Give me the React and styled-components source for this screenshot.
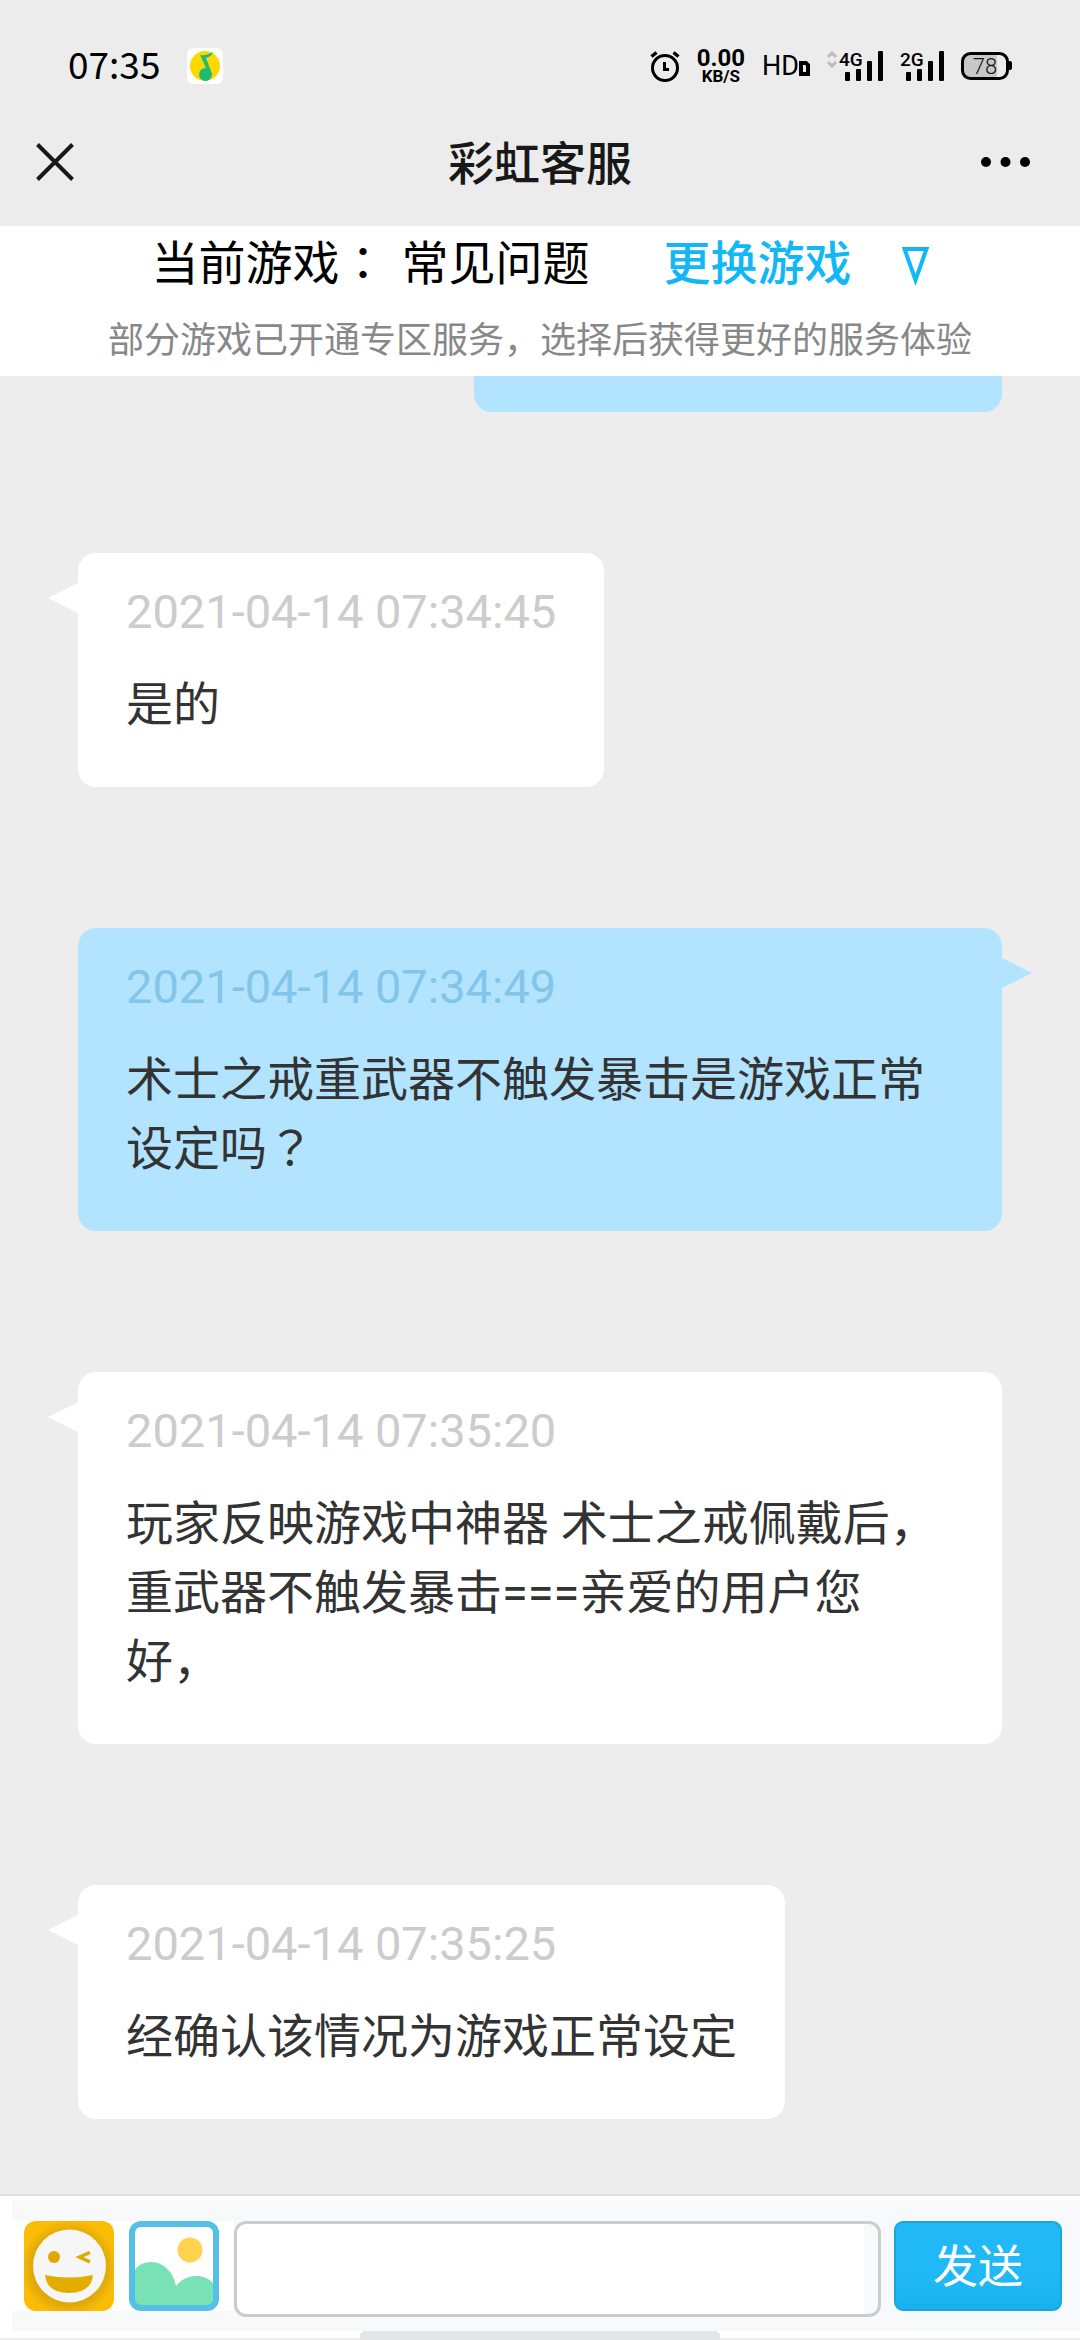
import React from 'react'
import styled, { createGlobalStyle, css } from 'styled-components'

const MusicIcon = () => (
  <svg width='36' height='36' viewBox='0 0 36 36' aria-hidden='true'>
    <rect width='36' height='36' rx='6' fill='#fff' />
    <circle cx='18' cy='18' r='15' fill='#fdd800' />
    <path d='M13 7c5 1 9-1 13-3-1 3-3 5-7 6l5 13a6.500 6.500 0 1 1-5-3L15 11z' fill='#1fbb74' />
  </svg>
)

const AlarmIcon = () => (
  <svg width='30' height='32' viewBox='0 0 30 32' fill='none' stroke='#000' aria-hidden='true'>
    <circle cx='15' cy='18' r='12.500' strokeWidth='3' />
    <path d='M14.500 12v7.500H19' strokeWidth='3' />
    <path d='M1.500 6.500 6.500 2.500M28.500 6.500 23.500 2.500' strokeWidth='3.500' />
  </svg>
)

const SimIcon = () => (
  <svg width='11' height='15' viewBox='0 0 11 15' aria-hidden='true'>
    <path d='M2 2h5l2 2v9H2z' fill='none' stroke='#000' strokeWidth='4' />
  </svg>
)

const Signal = ({ label, data }) => (
  <svg width={data ? 56 : 44} height='32' viewBox={data ? '-12 0 56 32' : '0 0 44 32'} role='img' aria-label={label}>
    {data && (
      <path d='M-11 7l4-4 4 4M-11 12l4 4 4-4' fill='none' stroke='#bbb' strokeWidth='3' />
    )}
    <text x='0' y='16' fontFamily='Roboto, sans-serif' fontSize='19' fontWeight='500'>{label}</text>
    <rect x='6' y='22' width='5' height='9' rx='1' />
    <rect x='17' y='19' width='5' height='12' rx='1' />
    <rect x='28' y='11' width='5' height='20' rx='1' />
    <rect x='39' y='1' width='5' height='30' rx='1' />
  </svg>
)

const Battery = () => (
  <svg width='51' height='28' viewBox='0 0 51 28' role='img' aria-label='78%'>
    <path d='M10 2h26v24H10a8 8 0 0 1-8-8v-8a8 8 0 0 1 8-8z' fill='#c8c8c8' />
    <rect x='1.500' y='1.500' width='45' height='25' rx='8' fill='none' stroke='#000' strokeWidth='3' />
    <path d='M47 9h2q2 0 2 2v5q0 2-2 2h-2z' />
    <text x='24' y='22' textAnchor='middle' fontFamily='Roboto, sans-serif' fontSize='22' fontWeight='300' fill='#111'>78</text>
  </svg>
)

const CloseIcon = () => (
  <svg width='38' height='38' viewBox='0 0 38 38' aria-hidden='true'>
    <path d='M1.500 1.500l35 35M36.500 1.500l-35 35' stroke='#181818' strokeWidth='4' />
  </svg>
)

const MoreIcon = () => (
  <svg width='50' height='10' viewBox='0 0 50 10' aria-hidden='true'>
    <circle cx='5' cy='5' r='5' />
    <circle cx='24.500' cy='5' r='5' />
    <circle cx='44' cy='5' r='5' />
  </svg>
)

const DownIcon = () => (
  <svg width='27' height='35' viewBox='0 0 27 35' aria-hidden='true'>
    <path d='M2.500 2h22L13.500 33z' fill='none' stroke='#12b7f5' strokeWidth='4' />
  </svg>
)

const EmojiIcon = () => (
  <svg width='90' height='90' viewBox='0 0 90 90' aria-hidden='true'>
    <defs>
      <radialGradient id='glow' gradientUnits='userSpaceOnUse' cx='45' cy='47' r='48'>
        <stop offset='0.720' stopColor='#dba50a' />
        <stop offset='1' stopColor='#fbbc05' />
      </radialGradient>
    </defs>
    <rect width='90' height='90' rx='12' fill='url(#glow)' />
    <circle cx='45.500' cy='45' r='36.500' fill='#f6f6f6' />
    <circle cx='30' cy='36' r='6' fill='#dfa800' />
    <path d='M66 31.500l-10.500 4.500 10.500 5' fill='none' stroke='#dfa800' strokeWidth='3.500' />
    <path d='M21 54q24 5 48 0-2 18-24 18T21 54z' fill='#e5ac00' />
  </svg>
)

const PictureIcon = () => (
  <svg width='90' height='90' viewBox='0 0 90 90' aria-hidden='true'>
    <rect x='3' y='3' width='84' height='84' rx='8' fill='#fff' />
    <circle cx='61' cy='29' r='12.500' fill='#ffd34f' />
    <path d='M5 50C9 44 15 41 22 41c13 0 23 11 25 24 9-12 28-14 38-2v22H5z' fill='#78e1b6' />
    <rect x='3' y='3' width='84' height='84' rx='9' fill='none' stroke='#56bfe8' strokeWidth='6' />
  </svg>
)

export default function App () {
  return (
    <Page>
      <GlobalStyle />
      <StatusBar>
        <Clock>07:35</Clock>
        <MusicIcon />
        <StatusIcons>
          <AlarmIcon />
          <Speed>
            <SpeedValue>0.00</SpeedValue>
            <SpeedUnit>KB/S</SpeedUnit>
          </Speed>
          <Hd>HD<SimIcon /></Hd>
          <Signal label='4G' data />
          <Signal label='2G' />
          <Battery />
        </StatusIcons>
      </StatusBar>

      <NavBar>
        <NavButton aria-label='关闭'><CloseIcon /></NavButton>
        <Title>彩虹客服</Title>
        <NavButton aria-label='更多'><MoreIcon /></NavButton>
      </NavBar>

      <GamePanel>
        <GameRow>
          <Current>
            <span>当前游戏<Mark>：</Mark></span>
            <span>常见问题</span>
          </Current>
          <ChangeGame>更换游戏<DownIcon /></ChangeGame>
        </GameRow>
        <Hint>部分游戏已开通专区服务，选择后获得更好的服务体验</Hint>
      </GamePanel>

      <Chat>
        <BubbleEnd aria-hidden='true' />
        {messages.map(({ id, time, text, own }) => (
          <Bubble key={id} $own={own}>
            <Time $own={own}>{time}</Time>
            <Text>{text}</Text>
          </Bubble>
        ))}
      </Chat>

      <Footer>
        <Toolbar>
          <Tools>
            <IconButton type='button' aria-label='表情'><EmojiIcon /></IconButton>
            <IconButton type='button' aria-label='图片'><PictureIcon /></IconButton>
          </Tools>
          <MessageInput type='text' aria-label='消息' />
          <SendButton>发送</SendButton>
        </Toolbar>
        <HomeIndicator />
      </Footer>
    </Page>
  )
}

const GlobalStyle = createGlobalStyle`
  * {
    box-sizing: border-box;
  }

  body {
    margin: 0;
    background: #ededed;
    font-family: Roboto, 'Noto Sans CJK SC', sans-serif;
  }

  button,
  input {
    font-family: inherit;
  }

  svg {
    display: block;
    flex: none;
    overflow: visible;
  }
`

const Page = styled.div`
  display: flex;
  flex-direction: column;
  min-height: 100vh;
`

const StatusBar = styled.div`
  display: flex;
  align-items: center;
  height: 98px;
  padding: 34px 68px 0;
  background: #ececec;
`

const Clock = styled.span`
  margin-right: 27px;
  padding-bottom: 6px;
  font-family: 'Noto Sans CJK SC', sans-serif;
  font-size: 37px;
  line-height: 40px;
`

const StatusIcons = styled.div`
  display: flex;
  align-items: center;
  gap: 17px;
  margin-left: auto;
`

const Speed = styled.div`
  display: flex;
  flex-direction: column;
  align-items: center;
  font-weight: 700;
`

const SpeedValue = styled.span`
  font-size: 24px;
  line-height: 20px;
`

const SpeedUnit = styled.span`
  font-size: 17px;
  line-height: 16px;
`

const Hd = styled.span`
  display: flex;
  align-items: flex-end;
  font-size: 27px;
  line-height: 20px;
`

const NavBar = styled.header`
  display: flex;
  align-items: center;
  justify-content: space-between;
  height: 128px;
  padding: 0 36px;
  background: #ececec;
`

const Title = styled.h1`
  margin: 0;
  padding-bottom: 4px;
  color: #181818;
  font-size: 46px;
  font-weight: 500;
`

const IconButton = styled.button`
  padding: 0;
  border: 0;
  background: none;
`

const NavButton = styled(IconButton)`
  width: 63px;
`

const GamePanel = styled.section`
  background: #fff;
  text-align: center;
`

const GameRow = styled.div`
  display: flex;
  align-items: center;
  justify-content: center;
  gap: 74px;
  height: 76px;
  font-size: 47px;
  line-height: 72px;
`

const Current = styled.div`
  display: flex;
  gap: 15px;
  color: #000;
`

// colon and question mark sit in the middle of their cell
const Mark = styled.span`
  font-family: 'Noto Sans CJK TC', sans-serif;
  line-height: 1;
`

const ChangeGame = styled.button`
  display: flex;
  align-items: center;
  gap: 50px;
  padding: 0;
  border: 0;
  background: none;
  color: #12b7f5;
  font-size: 47px;
  font-weight: 500;
  line-height: 72px;
`

const Hint = styled.p`
  margin: 0;
  padding-top: 4px;
  color: #888;
  font-size: 36px;
  line-height: 70px;
`

const Chat = styled.main`
  display: flex;
  flex: 1;
  flex-direction: column;
  align-items: flex-start;
  gap: 141px;
  padding: 0 78px 75px;
`

// bottom edge of the message scrolled under the panel
const BubbleEnd = styled.div`
  align-self: flex-end;
  width: 528px;
  height: 36px;
  border-radius: 0 0 18px 18px;
  background: #b2e3ff;
`

const Bubble = styled.article`
  position: relative;
  display: flex;
  flex-direction: column;
  gap: 24px;
  max-width: 100%;
  padding: 24px 48px 48px;
  border-radius: 18px;
  background: #fff;
  font-size: 47px;
  line-height: 69px;

  &::before {
    content: '';
    position: absolute;
    top: 30px;
    right: 100%;
    border: solid transparent;
    border-width: 15px 30px 15px 0;
    border-right-color: #fff;
  }

  ${({ $own }) => $own && css`
    align-self: flex-end;
    background: #b2e3ff;

    &::before {
      right: auto;
      left: 100%;
      border-width: 15px 0 15px 30px;
      border-left-color: #b2e3ff;
    }
  `}
`

const Time = styled.time`
  color: ${({ $own }) => $own ? '#83c5ea' : '#ccc'};
`

const Text = styled.p`
  margin: 0;
  color: #333;
  text-spacing-trim: space-all;
`

const Footer = styled.footer`
  position: relative;
  padding: 4px 0 7px 12px;
  border-top: 2px solid #dfdfdf;
  border-bottom: 2px solid #ececec;
  background: #fff;
`

const Toolbar = styled.form`
  display: flex;
  align-items: flex-start;
  padding: 21px 18px 14px 0;
  background: #f8f9fb;
`

const Tools = styled.div`
  display: flex;
  gap: 15px;
  padding: 0 15px 0 12px;
  background: #fff;
`

const MessageInput = styled.input`
  flex: 1;
  min-width: 0;
  height: 96px;
  margin-right: 13px;
  padding: 0 16px;
  border: 3px solid #ccc;
  border-radius: 12px;
  background: linear-gradient(to left, #f8f9fb 14px, #fff 14px);
  font-size: 47px;
`

const SendButton = styled.button`
  width: 168px;
  height: 90px;
  padding: 0 0 6px;
  border: 2px solid #1ea5d8;
  border-radius: 9px;
  background: linear-gradient(#21b9f5 60%, #17b2ee);
  color: #fff;
  font-size: 45px;
`

const HomeIndicator = styled.div`
  position: absolute;
  bottom: -2px;
  left: 50%;
  width: 360px;
  height: 9px;
  border-radius: 5px 5px 0 0;
  background: #e4e5e6;
  transform: translateX(-50%);
`

const messages = [
  { id: 1, time: '2021-04-14 07:34:45', text: '是的' },
  {
    id: 2,
    time: '2021-04-14 07:34:49',
    text: <>术士之戒重武器不触发暴击是游戏正常设定吗<Mark>？</Mark></>,
    own: true
  },
  { id: 3, time: '2021-04-14 07:35:20', text: '玩家反映游戏中神器 术士之戒佩戴后，重武器不触发暴击===亲爱的用户您好，' },
  { id: 4, time: '2021-04-14 07:35:25', text: '经确认该情况为游戏正常设定' }
]
